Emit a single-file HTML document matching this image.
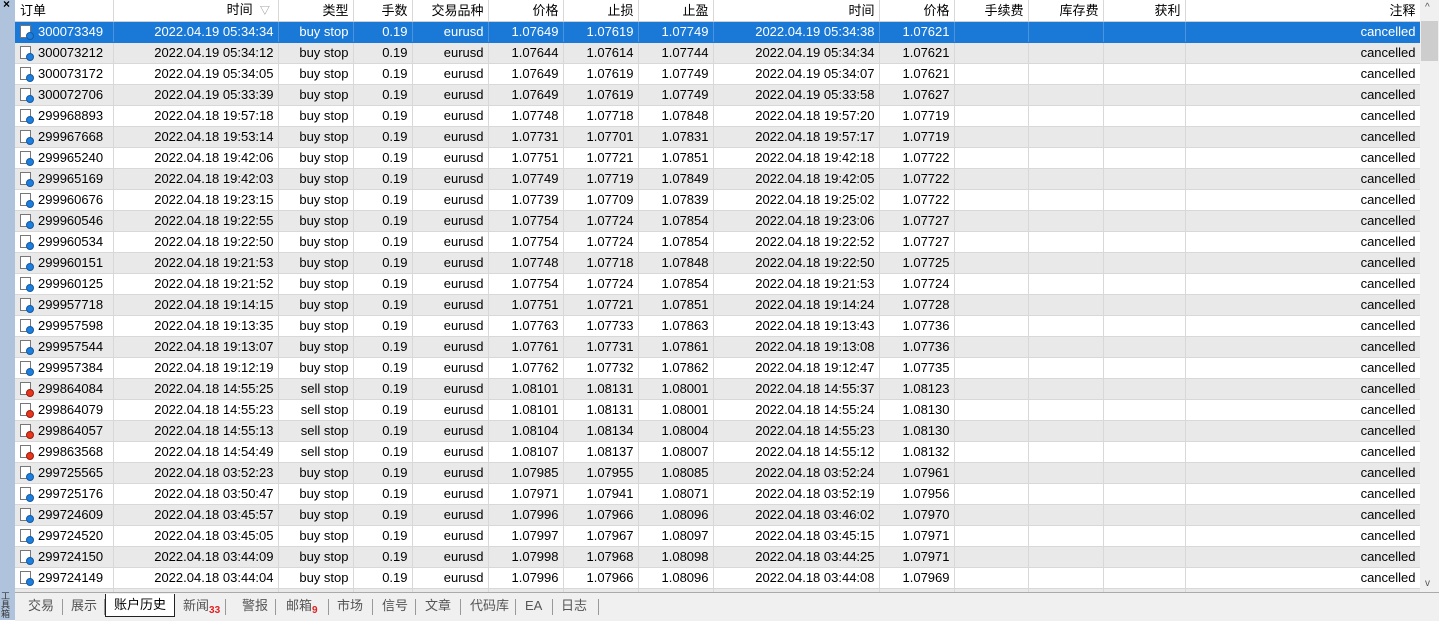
<!DOCTYPE html><html><head><meta charset="utf-8"><style>
body{margin:0;width:1439px;height:620px;overflow:hidden;background:#fff;font-family:"Liberation Sans","Noto Sans CJK SC",sans-serif;font-size:13px;color:#000;position:relative}
#strip{position:absolute;left:0;top:0;width:15px;height:620px;background:#afc4dc}
#x{position:absolute;left:3px;top:-3px;font-size:12px;font-weight:bold}
#vt{position:absolute;left:1px;top:592px;font-size:9px;line-height:9px;width:13px;color:#333}
table{position:absolute;left:15px;top:0;border-collapse:collapse;table-layout:fixed}
td{height:20px;padding:0 4px;border-right:1px solid #d8d8d8;border-bottom:1px solid #d8d8d8;text-align:right;white-space:nowrap;overflow:hidden;line-height:20px}
tr.h td{height:19px;line-height:19px;border-bottom:1px solid #d0d0d0}
tr.g td{background:#e9e9e9}
tr.s td{background:#1a79d6;color:#fff;border-color:#1a79d6 #fff #1a79d6 #fff;border-right:1px solid #4a95dd}
td.o{text-align:left;padding-left:5px}
.ic{display:inline-block;position:relative;width:11px;height:13px;border:1px solid #777;background:#fff;vertical-align:-2px;margin-right:7px;box-sizing:border-box}
.ic i{position:absolute;right:-4px;bottom:-3px;width:8px;height:8px;border-radius:50%;background:#1c7fe0;border:1px solid #155a9f;box-sizing:border-box}
.ic i.r{background:#e8361d;border-color:#9b1c0c}
#sb{position:absolute;left:1420px;top:0;width:19px;height:592px;background:#f0f0f0}
#sb .t{position:absolute;left:1px;top:21px;width:17px;height:40px;background:#cdcdcd}
#sb .a{position:absolute;left:5px;top:2px;font-size:10px;color:#555}
#sb .b{position:absolute;left:5px;top:578px;font-size:10px;color:#555}
#tabs{position:absolute;left:15px;top:592px;width:1424px;height:28px;background:#f0f0f0;border-top:1px solid #aaa}
#tabs span{position:absolute;top:4px;font-size:13px;color:#555;height:18px;line-height:18px}
#tabs .sep{width:1px;height:16px;background:#999;top:6px}
#tabs .act{top:1px;height:22px;line-height:22px;background:#fff;border:1px solid #222;border-top:none;color:#000;padding:0 8px}
sub{color:#e02020;font-size:10px;font-weight:bold;vertical-align:-3px}
</style></head><body>
<div id="strip"><div id="x">×</div><div id="vt">工具箱</div></div>
<table id="t"><colgroup>
<col style="width:98px"><col style="width:165px"><col style="width:75px"><col style="width:59px"><col style="width:76px"><col style="width:75px"><col style="width:75px"><col style="width:75px"><col style="width:166px"><col style="width:75px"><col style="width:74px"><col style="width:75px"><col style="width:82px"><col style="width:235px"></colgroup>
<tr class="h"><td class="o">订单</td><td>时间 &nbsp;<span style="color:#888;font-size:10px">▽</span>&nbsp;</td><td>类型</td><td>手数</td><td>交易品种</td><td>价格</td><td>止损</td><td>止盈</td><td>时间</td><td>价格</td><td>手续费</td><td>库存费</td><td>获利</td><td>注释</td></tr>
</table>
<div id="sb"><span class="a">^</span><div class="t"></div><span class="b">v</span></div>
<div id="tabs">
<span style="left:13px">交易</span><span class="sep" style="left:47px"></span>
<span style="left:56px">展示</span><span class="sep" style="left:89px"></span>
<span class="act" style="left:90px">账户历史</span>
<span style="left:168px">新闻<sub>33</sub></span><span class="sep" style="left:210px"></span>
<span style="left:227px">警报</span><span class="sep" style="left:260px"></span>
<span style="left:271px">邮箱<sub>9</sub></span><span class="sep" style="left:313px"></span>
<span style="left:322px">市场</span><span class="sep" style="left:357px"></span>
<span style="left:367px">信号</span><span class="sep" style="left:400px"></span>
<span style="left:410px">文章</span><span class="sep" style="left:445px"></span>
<span style="left:455px">代码库</span><span class="sep" style="left:500px"></span>
<span style="left:510px">EA</span><span class="sep" style="left:537px"></span>
<span style="left:546px">日志</span><span class="sep" style="left:583px"></span>
</div>
<script>
var d=`300073349|2022.04.19 05:34:34|b|1.07649|1.07619|1.07749|2022.04.19 05:34:38|1.07621
300073212|2022.04.19 05:34:12|b|1.07644|1.07614|1.07744|2022.04.19 05:34:34|1.07621
300073172|2022.04.19 05:34:05|b|1.07649|1.07619|1.07749|2022.04.19 05:34:07|1.07621
300072706|2022.04.19 05:33:39|b|1.07649|1.07619|1.07749|2022.04.19 05:33:58|1.07627
299968893|2022.04.18 19:57:18|b|1.07748|1.07718|1.07848|2022.04.18 19:57:20|1.07719
299967668|2022.04.18 19:53:14|b|1.07731|1.07701|1.07831|2022.04.18 19:57:17|1.07719
299965240|2022.04.18 19:42:06|b|1.07751|1.07721|1.07851|2022.04.18 19:42:18|1.07722
299965169|2022.04.18 19:42:03|b|1.07749|1.07719|1.07849|2022.04.18 19:42:05|1.07722
299960676|2022.04.18 19:23:15|b|1.07739|1.07709|1.07839|2022.04.18 19:25:02|1.07722
299960546|2022.04.18 19:22:55|b|1.07754|1.07724|1.07854|2022.04.18 19:23:06|1.07727
299960534|2022.04.18 19:22:50|b|1.07754|1.07724|1.07854|2022.04.18 19:22:52|1.07727
299960151|2022.04.18 19:21:53|b|1.07748|1.07718|1.07848|2022.04.18 19:22:50|1.07725
299960125|2022.04.18 19:21:52|b|1.07754|1.07724|1.07854|2022.04.18 19:21:53|1.07724
299957718|2022.04.18 19:14:15|b|1.07751|1.07721|1.07851|2022.04.18 19:14:24|1.07728
299957598|2022.04.18 19:13:35|b|1.07763|1.07733|1.07863|2022.04.18 19:13:43|1.07736
299957544|2022.04.18 19:13:07|b|1.07761|1.07731|1.07861|2022.04.18 19:13:08|1.07736
299957384|2022.04.18 19:12:19|b|1.07762|1.07732|1.07862|2022.04.18 19:12:47|1.07735
299864084|2022.04.18 14:55:25|s|1.08101|1.08131|1.08001|2022.04.18 14:55:37|1.08123
299864079|2022.04.18 14:55:23|s|1.08101|1.08131|1.08001|2022.04.18 14:55:24|1.08130
299864057|2022.04.18 14:55:13|s|1.08104|1.08134|1.08004|2022.04.18 14:55:23|1.08130
299863568|2022.04.18 14:54:49|s|1.08107|1.08137|1.08007|2022.04.18 14:55:12|1.08132
299725565|2022.04.18 03:52:23|b|1.07985|1.07955|1.08085|2022.04.18 03:52:24|1.07961
299725176|2022.04.18 03:50:47|b|1.07971|1.07941|1.08071|2022.04.18 03:52:19|1.07956
299724609|2022.04.18 03:45:57|b|1.07996|1.07966|1.08096|2022.04.18 03:46:02|1.07970
299724520|2022.04.18 03:45:05|b|1.07997|1.07967|1.08097|2022.04.18 03:45:15|1.07971
299724150|2022.04.18 03:44:09|b|1.07998|1.07968|1.08098|2022.04.18 03:44:25|1.07971
299724149|2022.04.18 03:44:04|b|1.07996|1.07966|1.08096|2022.04.18 03:44:08|1.07969
299724100|2022.04.18 03:43:50|b|1.07996|1.07966|1.08096|2022.04.18 03:43:55|1.07969`.split('\n');
var h='';d.forEach(function(l,i){var f=l.split('|');var s=f[2]=='s';
h+='<tr class="'+(i==0?'s':(i%2?'g':''))+'"><td class="o"><span class="ic"><i class="'+(s?'r':'')+'"></i></span>'+f[0]+'</td><td>'+f[1]+'</td><td>'+(s?'sell stop':'buy stop')+'</td><td>0.19</td><td>eurusd</td><td>'+f[3]+'</td><td>'+f[4]+'</td><td>'+f[5]+'</td><td>'+f[6]+'</td><td>'+f[7]+'</td><td></td><td></td><td></td><td>cancelled</td></tr>';});
document.getElementById('t').insertAdjacentHTML('beforeend',h);
</script>
</body></html>
